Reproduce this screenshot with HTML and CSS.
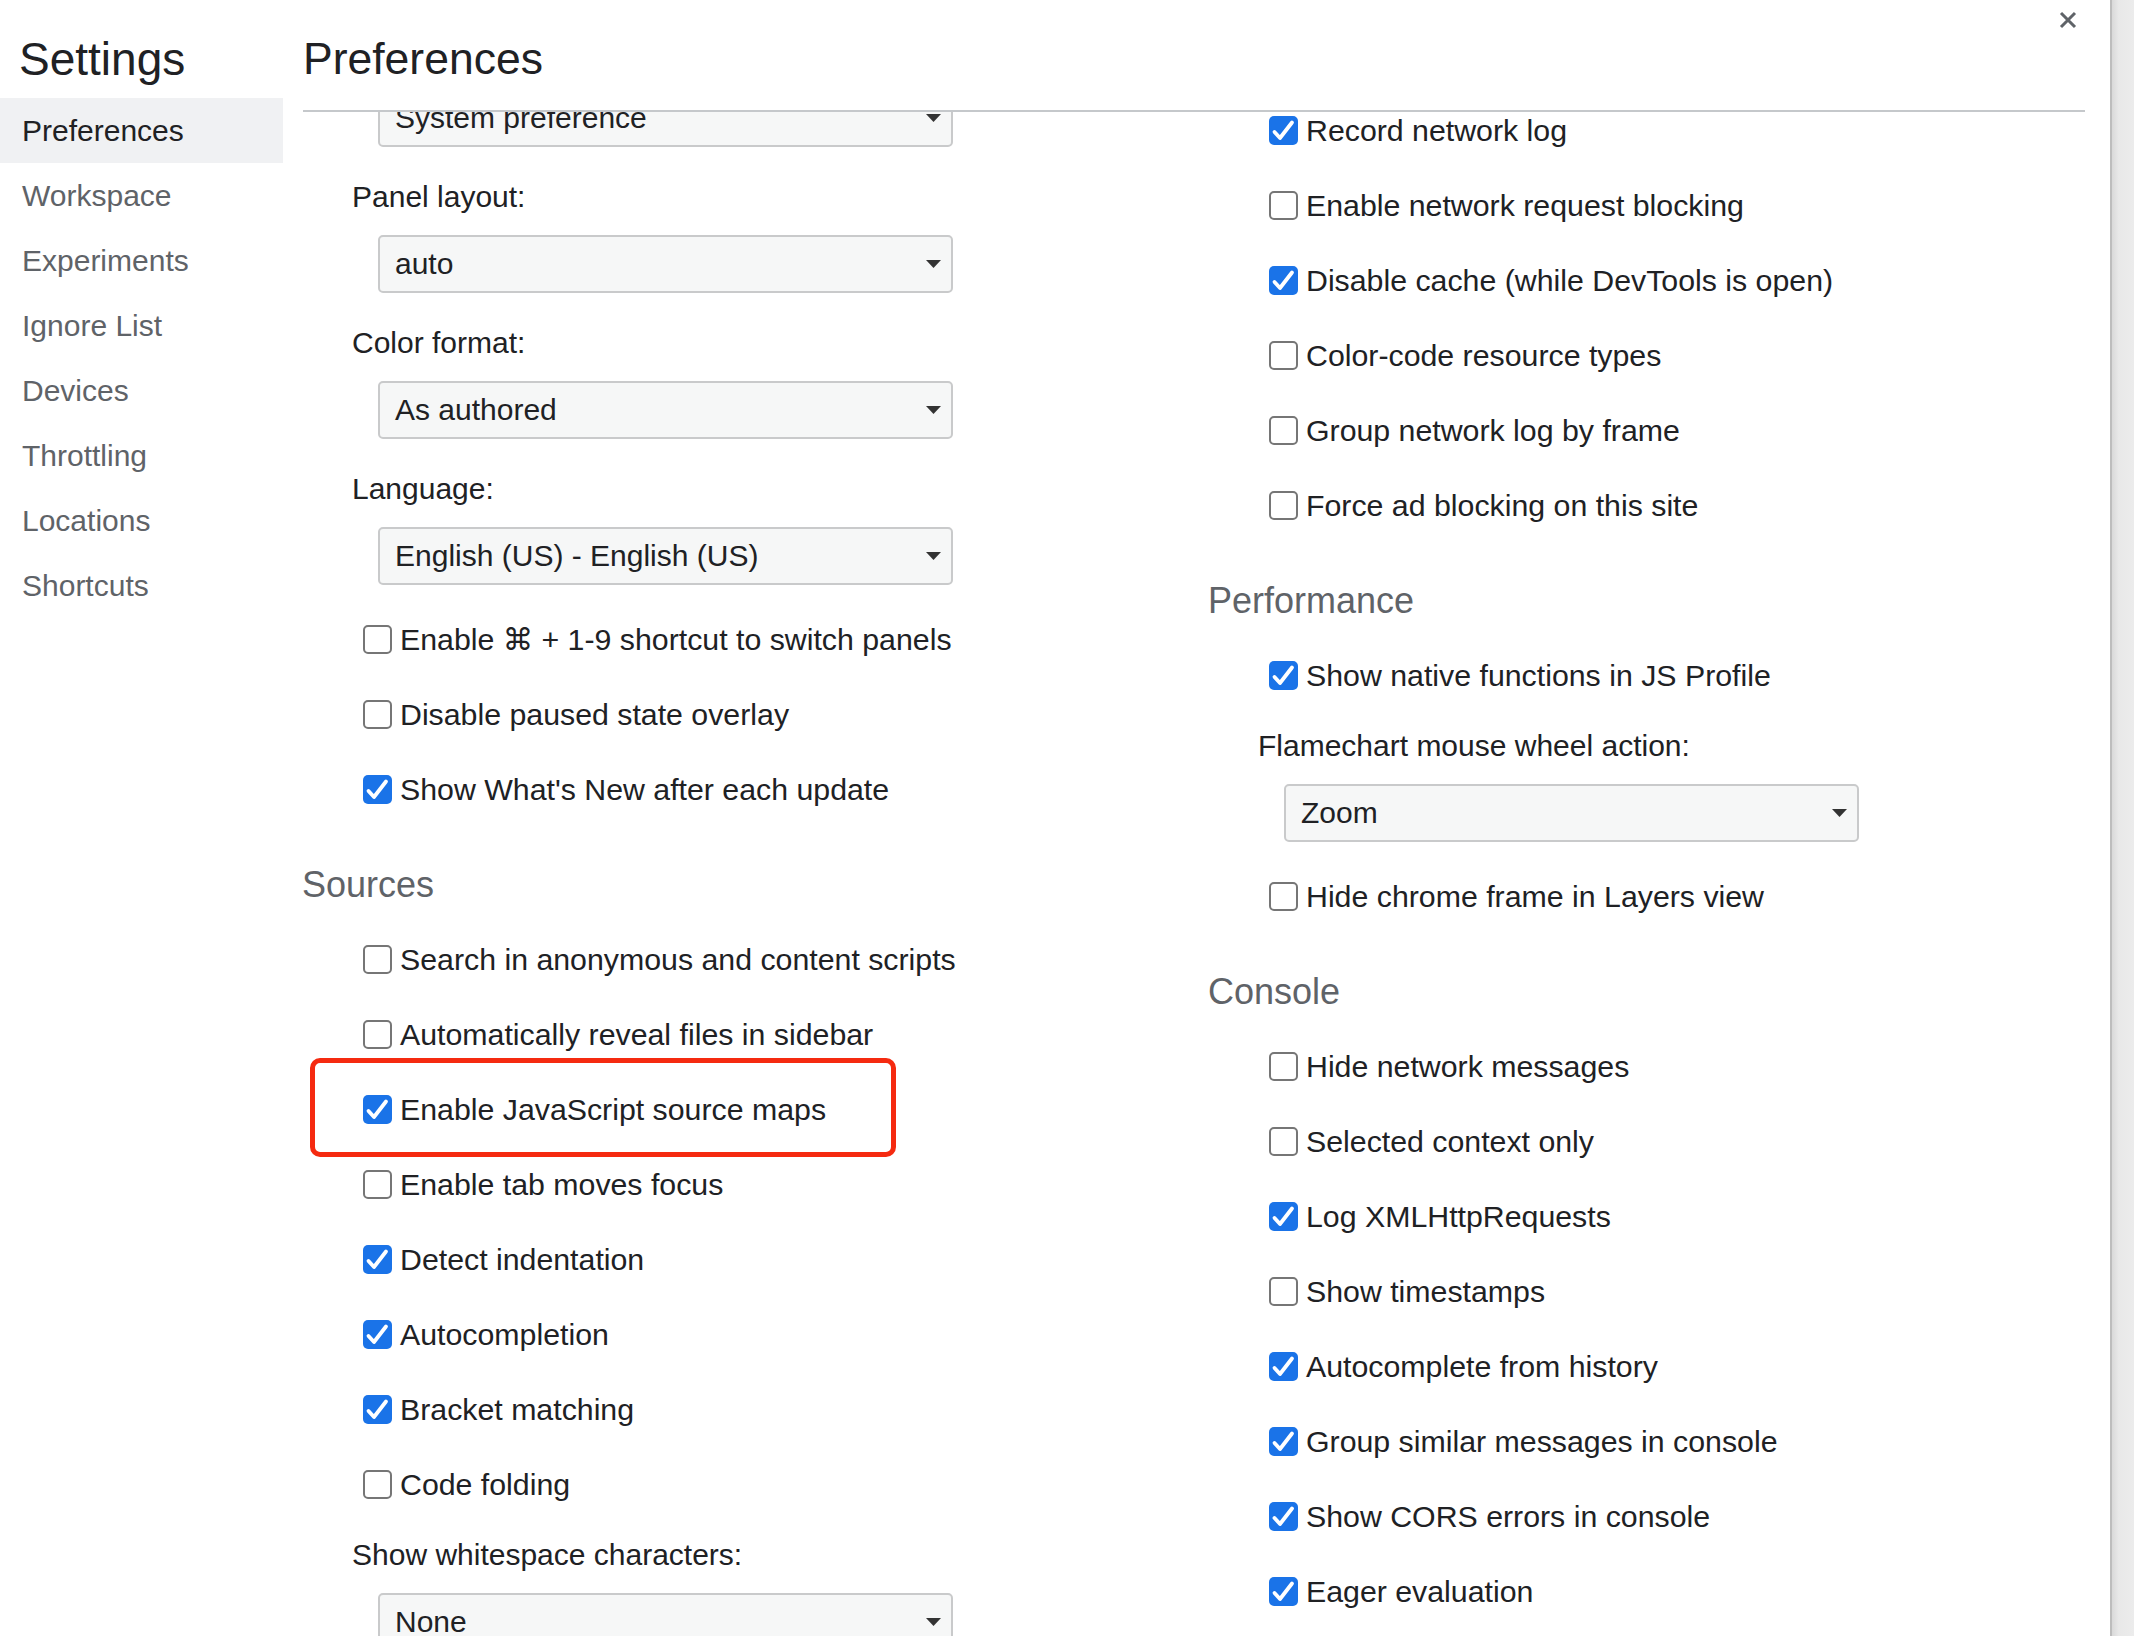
FILE: index.html
```html
<!DOCTYPE html>
<html lang="en">
<head>
<meta charset="utf-8">
<title>Settings - Preferences</title>
<link rel="stylesheet" href="styles.css">
</head>
<body>
<div class="app">
  <aside class="sidebar">
    <h1 class="title">Settings</h1>
    <nav class="nav">
      <div class="nav-item active">Preferences</div>
      <div class="nav-item">Workspace</div>
      <div class="nav-item">Experiments</div>
      <div class="nav-item">Ignore List</div>
      <div class="nav-item">Devices</div>
      <div class="nav-item">Throttling</div>
      <div class="nav-item">Locations</div>
      <div class="nav-item">Shortcuts</div>
    </nav>
  </aside>

  <main class="main">
    <header class="header"><h2 class="heading">Preferences</h2></header>
    <button class="close" aria-label="Close">
      <svg width="18" height="18" viewBox="0 0 18 18"><path d="M2 2 L16 16 M16 2 L2 16" stroke="#5f6368" stroke-width="3" fill="none"/></svg>
    </button>

    <div class="scroll">
      <div class="columns">
        <div class="col col-left">
          <div class="field field-scrolled">
            <div class="select"><span>System preference</span><svg class="arrow" width="15" height="8" viewBox="0 0 15 8"><path d="M0 0 H15 L7.5 8 Z" fill="#333"/></svg></div>
          </div>
          <div class="field">
            <div class="label">Panel layout:</div>
            <div class="select"><span>auto</span><svg class="arrow" width="15" height="8" viewBox="0 0 15 8"><path d="M0 0 H15 L7.5 8 Z" fill="#333"/></svg></div>
          </div>
          <div class="field">
            <div class="label">Color format:</div>
            <div class="select"><span>As authored</span><svg class="arrow" width="15" height="8" viewBox="0 0 15 8"><path d="M0 0 H15 L7.5 8 Z" fill="#333"/></svg></div>
          </div>
          <div class="field">
            <div class="label">Language:</div>
            <div class="select"><span>English (US) - English (US)</span><svg class="arrow" width="15" height="8" viewBox="0 0 15 8"><path d="M0 0 H15 L7.5 8 Z" fill="#333"/></svg></div>
          </div>
          <div class="row"><span class="box"></span><span class="text">Enable ⌘ + 1-9 shortcut to switch panels</span></div>
          <div class="row"><span class="box"></span><span class="text">Disable paused state overlay</span></div>
          <div class="row"><span class="box on"><svg viewBox="0 0 29 29"><path d="M5.5 16 L11 22 L23 6.5"/></svg></span><span class="text">Show What's New after each update</span></div>

          <h3 class="section">Sources</h3>
          <div class="row"><span class="box"></span><span class="text">Search in anonymous and content scripts</span></div>
          <div class="row"><span class="box"></span><span class="text">Automatically reveal files in sidebar</span></div>
          <div class="row marked"><span class="highlight"></span><span class="box on"><svg viewBox="0 0 29 29"><path d="M5.5 16 L11 22 L23 6.5"/></svg></span><span class="text">Enable JavaScript source maps</span></div>
          <div class="row"><span class="box"></span><span class="text">Enable tab moves focus</span></div>
          <div class="row"><span class="box on"><svg viewBox="0 0 29 29"><path d="M5.5 16 L11 22 L23 6.5"/></svg></span><span class="text">Detect indentation</span></div>
          <div class="row"><span class="box on"><svg viewBox="0 0 29 29"><path d="M5.5 16 L11 22 L23 6.5"/></svg></span><span class="text">Autocompletion</span></div>
          <div class="row"><span class="box on"><svg viewBox="0 0 29 29"><path d="M5.5 16 L11 22 L23 6.5"/></svg></span><span class="text">Bracket matching</span></div>
          <div class="row"><span class="box"></span><span class="text">Code folding</span></div>
          <div class="field">
            <div class="label">Show whitespace characters:</div>
            <div class="select"><span>None</span><svg class="arrow" width="15" height="8" viewBox="0 0 15 8"><path d="M0 0 H15 L7.5 8 Z" fill="#333"/></svg></div>
          </div>
        </div>

        <div class="col col-right">
          <div class="row"><span class="box on"><svg viewBox="0 0 29 29"><path d="M5.5 16 L11 22 L23 6.5"/></svg></span><span class="text">Record network log</span></div>
          <div class="row"><span class="box"></span><span class="text">Enable network request blocking</span></div>
          <div class="row"><span class="box on"><svg viewBox="0 0 29 29"><path d="M5.5 16 L11 22 L23 6.5"/></svg></span><span class="text">Disable cache (while DevTools is open)</span></div>
          <div class="row"><span class="box"></span><span class="text">Color-code resource types</span></div>
          <div class="row"><span class="box"></span><span class="text">Group network log by frame</span></div>
          <div class="row"><span class="box"></span><span class="text">Force ad blocking on this site</span></div>

          <h3 class="section">Performance</h3>
          <div class="row"><span class="box on"><svg viewBox="0 0 29 29"><path d="M5.5 16 L11 22 L23 6.5"/></svg></span><span class="text">Show native functions in JS Profile</span></div>
          <div class="field">
            <div class="label">Flamechart mouse wheel action:</div>
            <div class="select"><span>Zoom</span><svg class="arrow" width="15" height="8" viewBox="0 0 15 8"><path d="M0 0 H15 L7.5 8 Z" fill="#333"/></svg></div>
          </div>
          <div class="row"><span class="box"></span><span class="text">Hide chrome frame in Layers view</span></div>

          <h3 class="section">Console</h3>
          <div class="row"><span class="box"></span><span class="text">Hide network messages</span></div>
          <div class="row"><span class="box"></span><span class="text">Selected context only</span></div>
          <div class="row"><span class="box on"><svg viewBox="0 0 29 29"><path d="M5.5 16 L11 22 L23 6.5"/></svg></span><span class="text">Log XMLHttpRequests</span></div>
          <div class="row"><span class="box"></span><span class="text">Show timestamps</span></div>
          <div class="row"><span class="box on"><svg viewBox="0 0 29 29"><path d="M5.5 16 L11 22 L23 6.5"/></svg></span><span class="text">Autocomplete from history</span></div>
          <div class="row"><span class="box on"><svg viewBox="0 0 29 29"><path d="M5.5 16 L11 22 L23 6.5"/></svg></span><span class="text">Group similar messages in console</span></div>
          <div class="row"><span class="box on"><svg viewBox="0 0 29 29"><path d="M5.5 16 L11 22 L23 6.5"/></svg></span><span class="text">Show CORS errors in console</span></div>
          <div class="row"><span class="box on"><svg viewBox="0 0 29 29"><path d="M5.5 16 L11 22 L23 6.5"/></svg></span><span class="text">Eager evaluation</span></div>
        </div>
      </div>
    </div>
  </main>

  <div class="edge"></div>
</div>
</body>
</html>
```

FILE: styles.css
```css
* { box-sizing: border-box; }

html, body {
  margin: 0;
  padding: 0;
  background: #ffffff;
}

body {
  font-family: "Liberation Sans", Arial, "DejaVu Sans", sans-serif;
  color: #202124;
}

.app {
  display: flex;
  width: 2134px;
  height: 1636px;
  overflow: hidden;
}

/* Sidebar */
.sidebar {
  flex: none;
  width: 283px;
}

.title {
  margin: 0;
  padding: 34px 0 0 19px;
  font-size: 46px;
  line-height: 50px;
  font-weight: normal;
  color: #202124;
}

.nav {
  margin-top: 14px;
}

.nav-item {
  height: 65px;
  line-height: 65px;
  padding-left: 22px;
  font-size: 30px;
  color: #5f6368;
}

.nav-item.active {
  background: #f0f1f3;
  color: #202124;
}

/* Main */
.main {
  position: relative;
  flex: 1;
  min-width: 0;
  padding-right: 25px;
  display: flex;
  flex-direction: column;
}

.header {
  margin-left: 20px;
  padding: 34px 0 26px 0;
  border-bottom: 2px solid #c5c8cb;
}

.heading {
  margin: 0;
  font-size: 44.5px;
  line-height: 50px;
  font-weight: normal;
  color: #202124;
}

.close {
  position: absolute;
  top: 11px;
  right: 33px;
  width: 18px;
  height: 18px;
  padding: 0;
  border: 0;
  background: transparent;
}

.close svg { display: block; }

.scroll {
  flex: 1;
  margin-left: 19px;
  overflow: hidden;
}

.columns {
  display: grid;
  grid-template-columns: 906px 906px;
  align-items: start;
}

/* scrolled-out top of each column */
.col-left { margin-top: -23px; }
.col-right { margin-top: -19px; }

/* Fields */
.field {
  padding: 15px 0 17px 0;
}

.field-scrolled {
  padding-top: 0;
}

.field-scrolled .select {
  margin-top: 0;
}

.label {
  height: 36px;
  line-height: 36px;
  padding-left: 50px;
  font-size: 30px;
  color: #202124;
  white-space: nowrap;
}

.select {
  display: flex;
  align-items: center;
  width: 575px;
  height: 58px;
  margin: 20px 0 0 76px;
  padding: 0 10px 0 15px;
  border: 2px solid #c9cacb;
  border-radius: 5px;
  background: #f6f7f7;
  font-size: 30px;
  line-height: 36px;
  color: #202124;
}

.select .arrow {
  margin-left: auto;
  flex: none;
}

/* Section titles */
.section {
  margin: 36px 0 15px 0;
  height: 44px;
  font-size: 36px;
  line-height: 44px;
  font-weight: normal;
  color: #5f6368;
}

/* Checkbox rows */
.row {
  position: relative;
  display: flex;
  align-items: center;
  height: 75px;
  padding-left: 61px;
}

.box {
  flex: none;
  width: 29px;
  height: 29px;
  border: 2px solid #767676;
  border-radius: 5px;
  background: #fff;
}

.box.on {
  border: 0;
  background: #1a73e8;
}

.box svg {
  display: block;
  width: 29px;
  height: 29px;
}

.box svg path {
  fill: none;
  stroke: #ffffff;
  stroke-width: 3.8;
  stroke-linecap: round;
  stroke-linejoin: round;
}

.text {
  margin-left: 8px;
  font-size: 30.3px;
  line-height: 36px;
  color: #202124;
  white-space: nowrap;
}

/* Annotation overlay */
.highlight {
  position: absolute;
  left: 8px;
  top: -14px;
  width: 586px;
  height: 99px;
  border: 5px solid #f52a10;
  border-radius: 10px;
  pointer-events: none;
}

/* Window edge */
.edge {
  flex: none;
  width: 24px;
  border-left: 2px solid #bdbdbd;
  background: linear-gradient(to right, #d9d9d9, #e8e8e8 30%, #ececec);
}
```
